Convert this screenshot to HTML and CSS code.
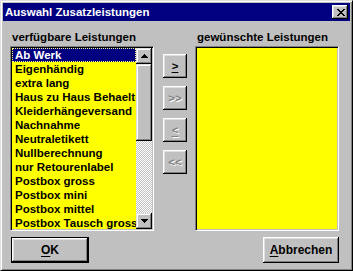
FILE: index.html
```html
<!DOCTYPE html>
<html lang="de">
<head>
<meta charset="utf-8">
<title>Auswahl Zusatzleistungen</title>
<link rel="stylesheet" href="styles.css">
</head>
<body>
<div class="window">
  <div class="titlebar">
    <span class="title">Auswahl Zusatzleistungen</span>
    <span class="close">
      <svg width="8" height="7" viewBox="0 0 8 7" shape-rendering="crispEdges"><path d="M0 0h2v1H0zM6 0h2v1H6zM1 1h2v1H1zM5 1h2v1H5zM2 2h4v1H2zM3 3h2v1H3zM2 4h4v1H2zM1 5h2v1H1zM5 5h2v1H5zM0 6h2v1H0zM6 6h2v1H6z" fill="#000"/></svg>
    </span>
  </div>
  <div class="content">
    <div class="columns">
      <div class="col">
        <div class="label">verfügbare Leistungen</div>
        <div class="listbox">
          <div class="items">
            <div class="item selected"><span class="focus">Ab Werk</span></div>
            <div class="item">Eigenhändig</div>
            <div class="item">extra lang</div>
            <div class="item">Haus zu Haus Behaelter</div>
            <div class="item">Kleiderhängeversand</div>
            <div class="item">Nachnahme</div>
            <div class="item">Neutraletikett</div>
            <div class="item">Nullberechnung</div>
            <div class="item">nur Retourenlabel</div>
            <div class="item">Postbox gross</div>
            <div class="item">Postbox mini</div>
            <div class="item">Postbox mittel</div>
            <div class="item">Postbox Tausch gross</div>
          </div>
          <div class="scrollbar">
            <div class="sbtn">
              <svg width="7" height="4" viewBox="0 0 7 4" shape-rendering="crispEdges"><path d="M3 0h1v1H3zM2 1h3v1H2zM1 2h5v1H1zM0 3h7v1H0z" fill="#000"/></svg>
            </div>
            <div class="thumb"></div>
            <div class="track"></div>
            <div class="sbtn">
              <svg width="7" height="4" viewBox="0 0 7 4" shape-rendering="crispEdges"><path d="M0 0h7v1H0zM1 1h5v1H1zM2 2h3v1H2zM3 3h1v1H3z" fill="#000"/></svg>
            </div>
          </div>
        </div>
      </div>
      <div class="mid">
        <div class="btn small"><span class="u">&gt;</span></div>
        <div class="btn small disabled">&gt;&gt;</div>
        <div class="btn small disabled"><span class="u">&lt;</span></div>
        <div class="btn small disabled">&lt;&lt;</div>
      </div>
      <div class="col">
        <div class="label">gewünschte Leistungen</div>
        <div class="listbox empty"></div>
      </div>
    </div>
    <div class="footer">
      <div class="default"><div class="btn wide"><span class="u">O</span>K</div></div>
      <div class="btn wide"><span class="u">A</span>bbrechen</div>
    </div>
  </div>
</div>
</body>
</html>
```

FILE: styles.css
```css
html, body {
  margin: 0;
  padding: 0;
  background: #c0c0c0;
}

.window {
  width: 353px;
  height: 271px;
  box-sizing: border-box;
  background: #c0c0c0;
  border-style: solid;
  border-width: 1px;
  border-color: #dfdfdf #000 #000 #dfdfdf;
  box-shadow: inset 1px 1px #fff, inset -1px -1px #808080;
  padding: 2px;
  font-family: "Liberation Sans", Arial, sans-serif;
  font-weight: bold;
  font-size: 11.5px;
  color: #000;
  display: flex;
  flex-direction: column;
}

.titlebar {
  height: 18px;
  background: #000080;
  display: flex;
  align-items: center;
  justify-content: space-between;
  padding-left: 2px;
  padding-right: 2px;
}

.title {
  color: #fff;
  font-size: 11.5px;
  line-height: 14px;
  white-space: nowrap;
}

.close {
  width: 16px;
  height: 14px;
  box-sizing: border-box;
  background: #c0c0c0;
  box-shadow: inset -1px -1px #000, inset 1px 1px #fff, inset -2px -2px #808080, inset 2px 2px #dfdfdf;
  display: flex;
  align-items: center;
  justify-content: center;
  padding-left: 1px;
}

.close svg { display: block; }

.content {
  padding: 9px 0 0 7px;
  display: flex;
  flex-direction: column;
}

.columns {
  display: flex;
}

.col {
  width: 144px;
  display: flex;
  flex-direction: column;
}

.label {
  height: 14px;
  line-height: 14px;
  padding-left: 2px;
  margin-bottom: 2px;
  white-space: nowrap;
}

.listbox {
  width: 144px;
  height: 185px;
  box-sizing: border-box;
  border-style: solid;
  border-width: 1px;
  border-color: #808080 #fff #fff #808080;
  box-shadow: inset 1px 1px #000, inset -1px -1px #c0c0c0;
  padding: 1px;
  display: flex;
  background: #ffff00;
  overflow: hidden;
}

.items {
  flex: 1;
  min-width: 0;
  overflow: hidden;
}

.item {
  height: 14px;
  line-height: 14px;
  padding-left: 3px;
  white-space: nowrap;
  overflow: hidden;
}

.item.selected {
  background: #000080;
  color: #fff;
  padding-left: 0;
}

.focus {
  display: block;
  height: 14px;
  box-sizing: border-box;
  padding-left: 2px;
  border: 1px dotted #ffff80;
  line-height: 12px;
}

.scrollbar {
  width: 16px;
  display: flex;
  flex-direction: column;
  background-color: #c0c0c0;
}

.sbtn {
  width: 16px;
  height: 16px;
  box-sizing: border-box;
  background: #c0c0c0;
  box-shadow: inset -1px -1px #000, inset 1px 1px #dfdfdf, inset -2px -2px #808080, inset 2px 2px #fff;
  display: flex;
  align-items: center;
  justify-content: center;
}

.sbtn svg { display: block; }

.thumb {
  height: 77px;
  background: #c0c0c0;
  box-shadow: inset -1px -1px #000, inset 1px 1px #dfdfdf, inset -2px -2px #808080, inset 2px 2px #fff;
}

.track {
  flex: 1;
  background-color: #c0c0c0;
  background-image: repeating-conic-gradient(#fff 0 25%, #c0c0c0 0 50%);
  background-size: 2px 2px;
}

.mid {
  width: 24px;
  margin: 24px 8px 0 9px;
  display: flex;
  flex-direction: column;
  gap: 8px;
}

.btn {
  box-sizing: border-box;
  background: #c0c0c0;
  box-shadow: inset -1px -1px #000, inset 1px 1px #fff, inset -2px -2px #808080, inset 2px 2px #dfdfdf;
  display: flex;
  align-items: center;
  justify-content: center;
  white-space: nowrap;
}

.btn.small {
  width: 24px;
  height: 24px;
}

.btn.disabled {
  color: #808080;
  text-shadow: 1px 1px 0 #fff;
}

.u {
  text-decoration: underline;
  text-underline-offset: 2px;
}

.footer {
  display: flex;
  justify-content: space-between;
  margin-top: 6px;
  padding-left: 1px;
  padding-right: 11px;
}

.default {
  border: 1px solid #000;
}

.btn.wide {
  width: 76px;
  height: 24px;
  font-size: 12px;
}

.footer > .btn.wide {
  height: 26px;
}
```
